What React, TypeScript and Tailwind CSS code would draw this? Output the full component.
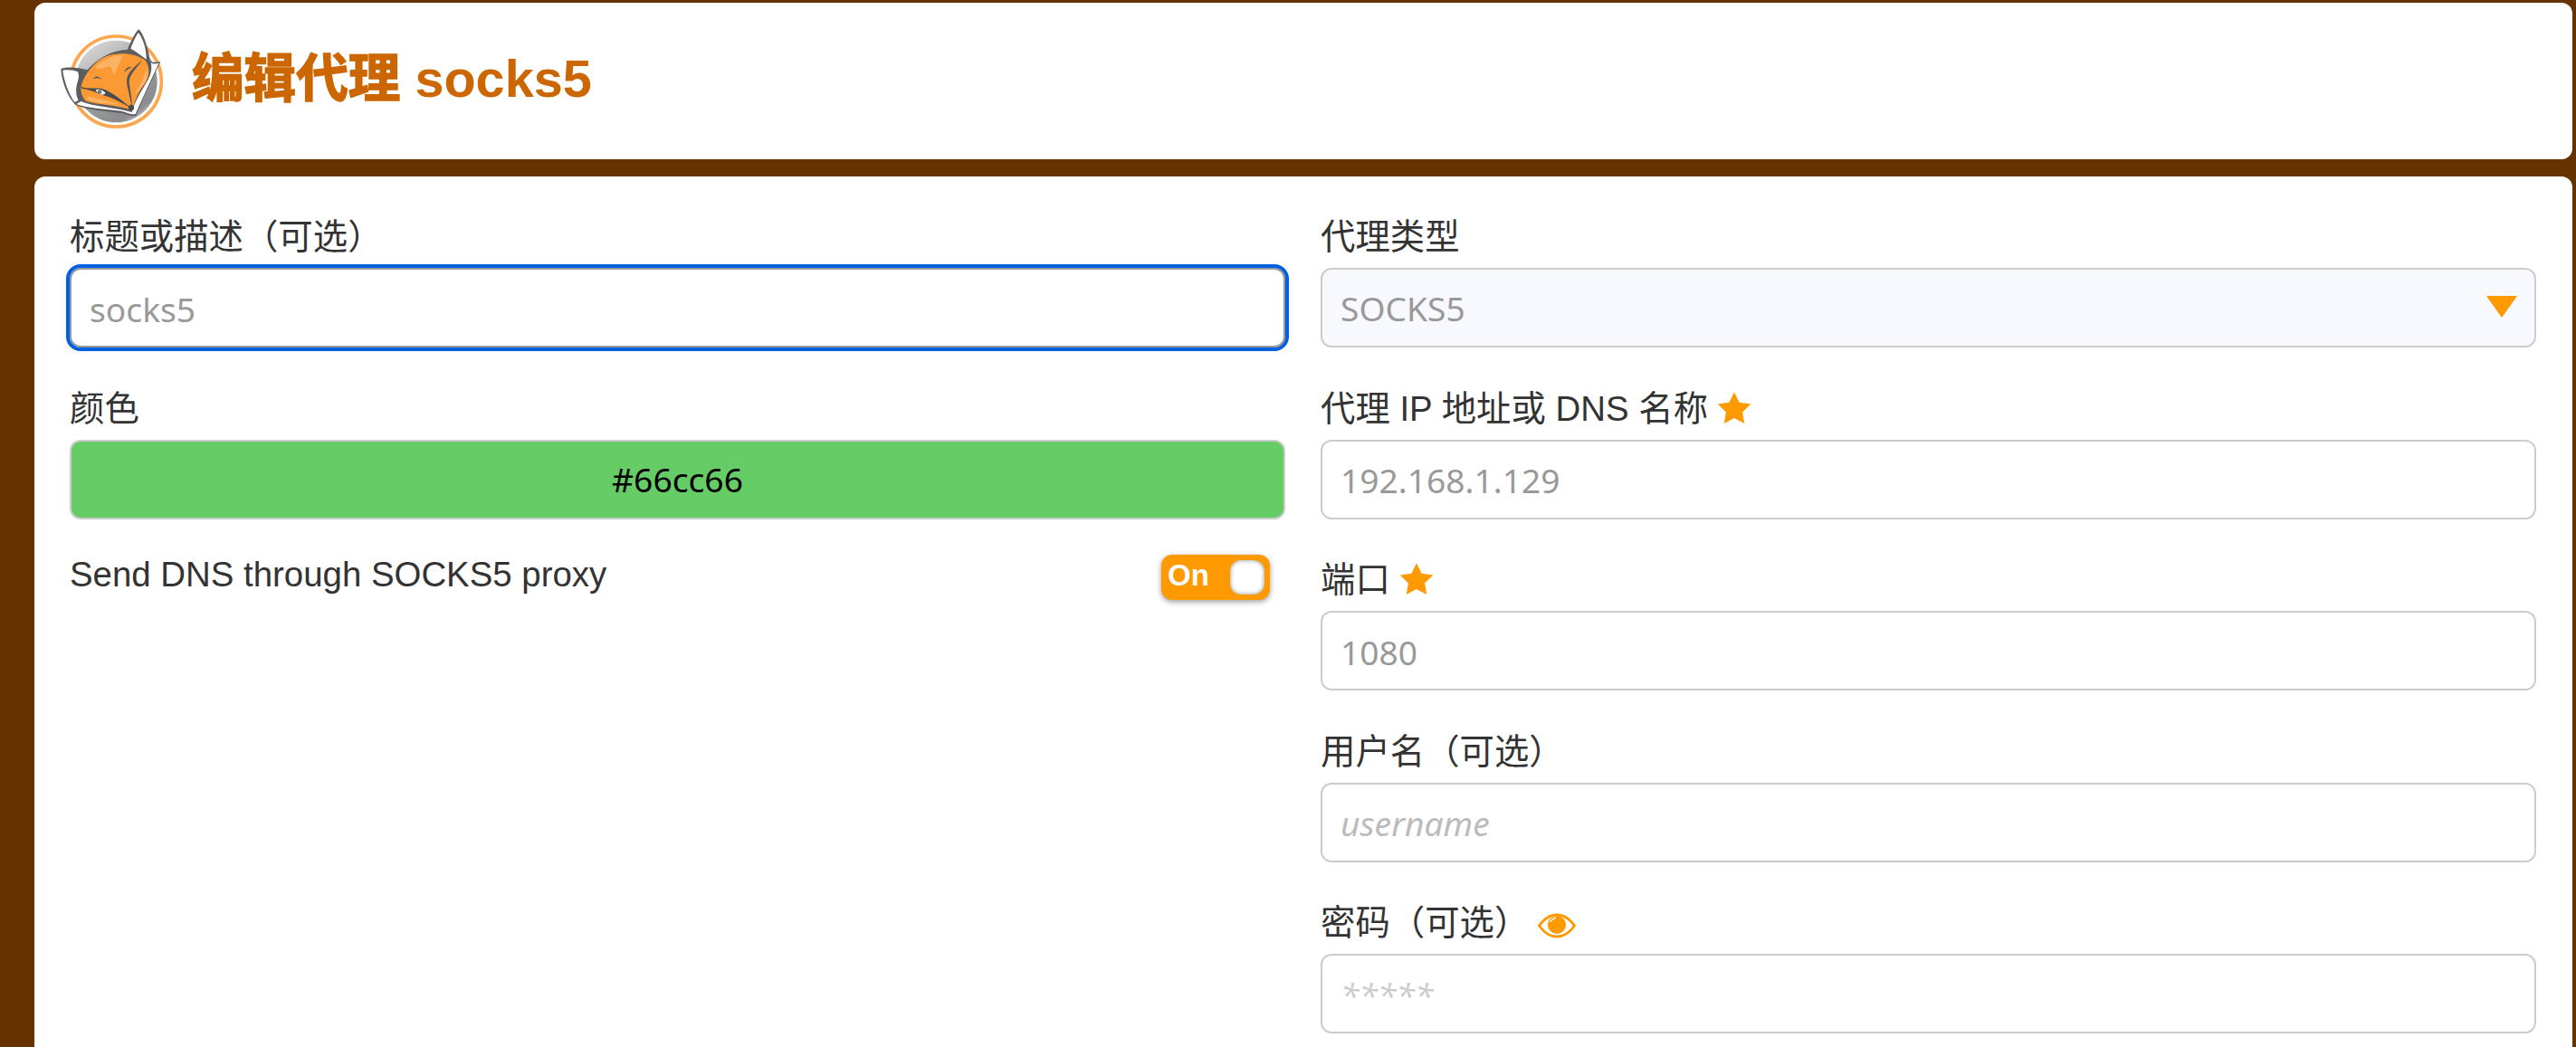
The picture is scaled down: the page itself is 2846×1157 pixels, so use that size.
const font = "font-['Liberation_Sans','Noto_Sans_CJK_SC',sans-serif]";
const inputFont = "font-['Noto_Sans',sans-serif]";

function Fox() {
  return (
    <svg width="150" height="130" viewBox="0 0 450 390" className="shrink-0">
      <defs>
        <linearGradient id="disc" x1="0.15" y1="0" x2="0.85" y2="1">
          <stop offset="0" stopColor="#dcdcdc" />
          <stop offset="0.55" stopColor="#9a9b9d" />
          <stop offset="0.85" stopColor="#8a8b8d" />
          <stop offset="1" stopColor="#d4d4d4" />
        </linearGradient>
      </defs>
      <circle cx="235" cy="210" r="150" fill="#fff" stroke="#fca64d" strokeWidth="11" />
      <circle cx="235" cy="210" r="136" fill="url(#disc)" />
      <path d="M310 37 C296 50 285 75 272 105 C235 106 185 122 140 172 C110 164 75 160 52 168 C54 210 72 255 97 285 C130 305 200 308 258 316 C275 322 290 326 301 324 C315 285 350 215 382 143 C368 146 355 150 347 140 C342 105 328 55 310 37 Z" fill="#5c5d5f" />
      <path d="M309 48 C298 62 290 82 283 101 C300 110 320 125 335 137 C336 105 325 70 309 48 Z" fill="#fff" />
      <path d="M58 173 C76 170 94 172 108 178 C112 188 112 200 106 215 C100 235 102 258 110 272 L97 279 C78 250 62 210 58 173 Z" fill="#fff" />
      <path d="M350 147 C358 153 368 152 376 149 C358 190 328 252 299 318 C285 322 270 312 252 308 C200 302 135 298 103 285 L118 276 C160 294 235 296 287 312 C298 272 322 238 342 202 C352 182 354 163 350 147 Z" fill="#fff" />
      <path d="M118 232 C122 200 150 160 185 135 C225 112 290 110 332 140 C352 170 344 200 324 226 C306 250 296 277 290 306 C240 288 180 288 135 276 C123 264 118 248 118 232 Z" fill="#fb9a35" />
      <path d="M165 165 C185 140 225 122 258 123 C248 140 240 160 228 190 C224 170 216 160 212 158 C198 165 184 172 165 165 Z" fill="#fcb366" />
      <path d="M140 258 C175 272 210 272 250 288 C210 284 165 282 140 270 Z" fill="#fcb366" />
      <path d="M296 252 C310 225 328 205 335 165 C345 190 335 210 318 232 C310 242 302 250 296 252 Z" fill="#fcb366" />
      <path d="M120 228 C145 238 175 226 200 238 C232 254 262 280 287 300 C255 282 225 264 200 258 C180 252 155 238 120 233 Z" fill="#4a4b4d" />
      <path d="M286 298 C283 262 270 232 270 205 C272 180 298 160 322 138 C305 165 280 185 278 210 C280 240 290 270 286 298 Z" fill="#55565a" />
      <path d="M167 238 C176 234 190 238 200 248 C194 256 176 258 167 238 Z" fill="#fff" />
      <circle cx="180" cy="245" r="7" fill="#777" />
      <path d="M158 202 C165 190 178 190 187 204 C178 197 168 198 158 202 Z" fill="#55565a" />
      <path d="M263 179 C265 167 275 160 288 163 C280 166 272 170 263 179 Z" fill="#55565a" />
      <circle cx="285" cy="297" r="9.500" fill="#4a4b4d" />
    </svg>
  );
}

function Star() {
  return (
    <svg width="38" height="38" viewBox="0 0 24 24" className="shrink-0 -mt-[2px]">
      <path d="M12 .8l3.500 7.300 8 1.100-5.800 5.600 1.400 8L12 19 4.900 22.800l1.400-8L.5 9.200l8-1.100z" fill="#f90" />
    </svg>
  );
}

function Eye() {
  return (
    <svg width="42" height="28" viewBox="0 0 42 28" className="shrink-0 mt-[6px]">
      <path d="M1.500 14C7 6 13 2 21 2s14 4 19.500 12C35 22 29 26 21 26S7 22 1.500 14Z" fill="none" stroke="#f90" strokeWidth="2.800" />
      <circle cx="21" cy="13" r="10" fill="#f90" />
      <path d="M14 10c1-3 3-4 6-5" fill="none" stroke="#fff" strokeWidth="1.500" />
    </svg>
  );
}

function Field({ label, children }: { label: React.ReactNode; children: React.ReactNode }) {
  return (
    <div className="flex flex-col">
      <div className="flex items-center h-[56px] mb-[6px] gap-[10px] text-[38.400px] leading-[50px] text-[#333]">{label}</div>
      {children}
    </div>
  );
}

const inputCls =
  "block w-full h-[88px] rounded-[12px] border-[2px] bg-white pl-[20px] pr-[20px] pt-[2px] text-[37.200px] placeholder:text-[#999] " + inputFont;

export default function App() {
  return (
    <div className={`${font} h-[1157px] overflow-hidden bg-[#663300] pl-[38px] pr-[4px] pt-[3px] flex flex-col gap-[19px]`}>
      <header className="h-[173px] shrink-0 rounded-[12px] bg-white flex items-center pl-[12px] pb-[9px] gap-[12px]">
        <Fox />
        <h1 className="font-bold text-[57.600px] leading-[66px] mt-[4px] text-[#cc6600]">
          <span className="[-webkit-text-stroke:1.500px_#cc6600]">编辑代理</span> socks5
        </h1>
      </header>
      <main className="flex-1 rounded-t-[12px] bg-white pl-[39px] pr-[40px] pt-[39px] grid grid-cols-2 gap-x-[39px] items-start">
        <div className="flex flex-col">
          <Field label="标题或描述（可选）">
            <input
              readOnly
              placeholder="socks5"
              className={`${inputCls} border-[#999] outline-4 outline-[#0060df] shadow-[0_0_10px_4px_rgba(0,0,0,0.05)]`}
            />
          </Field>
          <div className="mt-[39.500px]">
            <Field label="颜色">
              <div className={`${inputFont} h-[88px] rounded-[12px] border-[2px] border-[#ccc] bg-[#66cc66] flex items-center justify-center text-[37.200px] text-black`}>
                #66cc66
              </div>
            </Field>
          </div>
          <div className="mt-[36px] flex items-start justify-between pr-[17px]">
            <span className="text-[38.400px] leading-[50px] text-[#333]">Send DNS through SOCKS5 proxy</span>
            <div className="mt-[3px] w-[120px] h-[50px] rounded-[12px] bg-[#f90] shadow-[0_2px_6px_rgba(0,0,0,0.4)] flex items-center justify-between pl-[7px] pr-[6px]">
              <span className="text-[33px] leading-[40px] -mt-[4px] font-bold text-white">On</span>
              <span className="size-[38px] rounded-[12px] bg-white shadow-[inset_0_0_5px_rgba(0,0,0,0.45)]" />
            </div>
          </div>
        </div>
        <div className="flex flex-col gap-[39.500px]">
          <Field label="代理类型">
            <div className={`${inputFont} relative h-[88px] rounded-[12px] border-[2px] border-[#ccc] bg-[#f8f9ff] flex items-center pl-[20px] pt-[2px] text-[37.200px] text-[#999]`}>
              SOCKS5
              <span className="absolute right-[19px] top-[29px] w-0 h-0 border-x-[17px] border-x-transparent border-t-[24px] border-t-[#f90]" />
            </div>
          </Field>
          <Field label={<>代理 IP 地址或 DNS 名称 <Star /></>}>
            <input readOnly placeholder="192.168.1.129" className={`${inputCls} border-[#ccc]`} />
          </Field>
          <Field label={<>端口 <Star /></>}>
            <input readOnly placeholder="1080" className={`${inputCls} border-[#ccc]`} />
          </Field>
          <Field label="用户名（可选）">
            <input readOnly placeholder="username" className={`${inputCls} border-[#ccc] italic placeholder:text-[#bbb]`} />
          </Field>
          <Field label={<>密码（可选） <Eye /></>}>
            <input readOnly placeholder="*****" className={`${inputCls} border-[#ccc] italic placeholder:text-[#ccc]`} />
          </Field>
        </div>
      </main>
    </div>
  );
}
